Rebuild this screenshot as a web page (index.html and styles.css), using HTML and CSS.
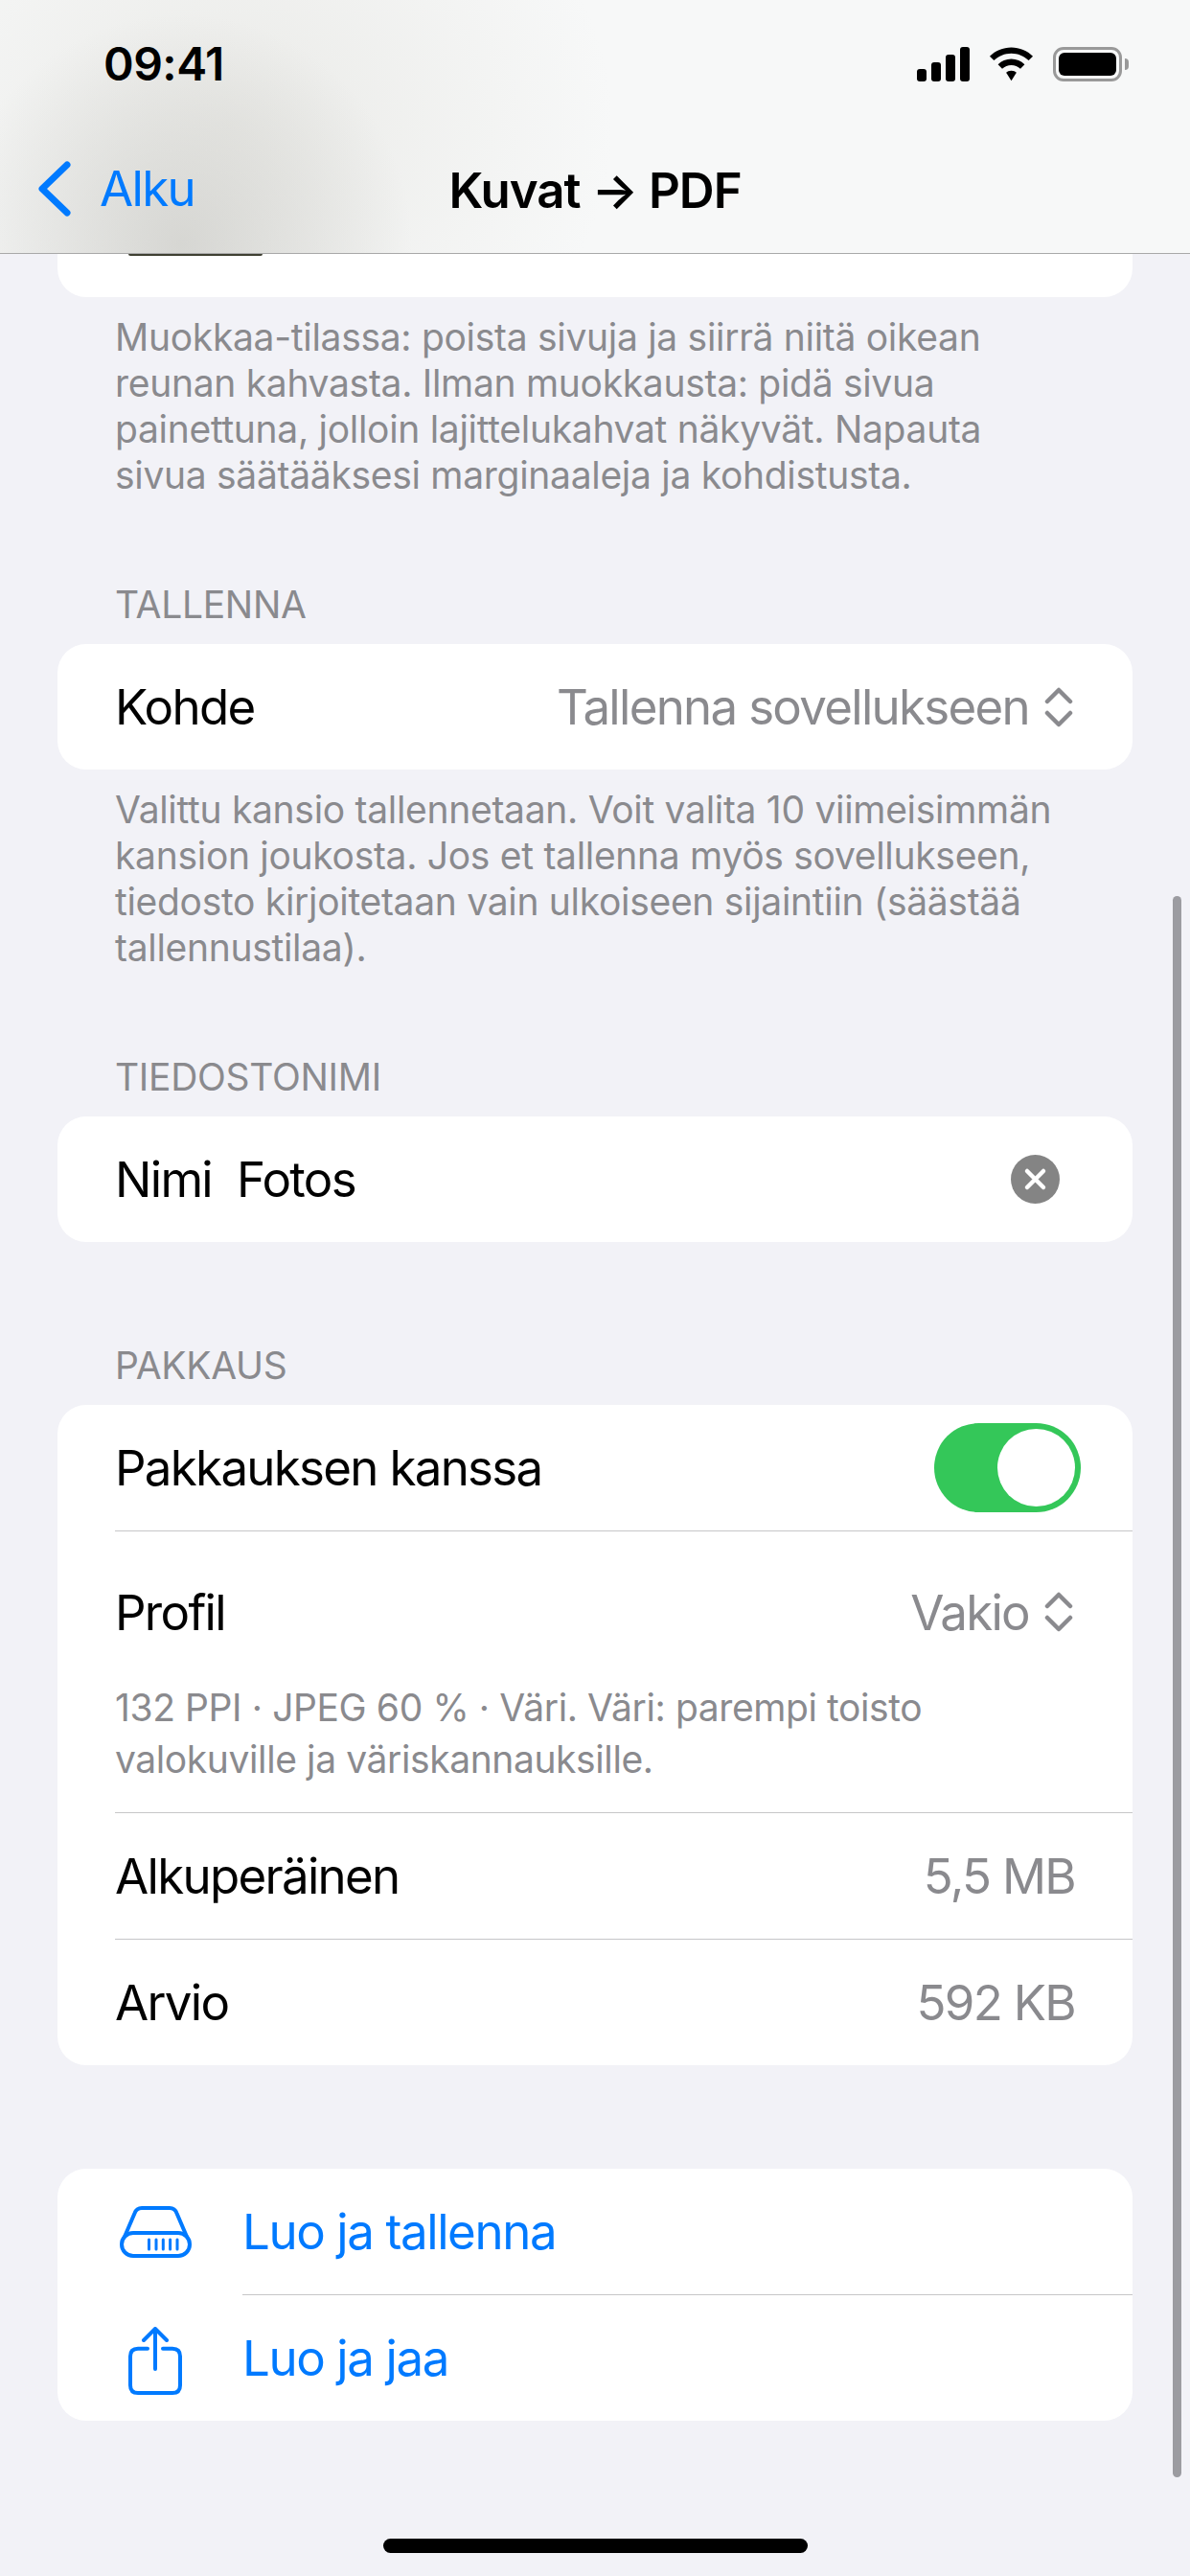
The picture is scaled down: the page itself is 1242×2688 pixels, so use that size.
FILE: index.html
```html
<!DOCTYPE html>
<html lang="fi">
<head>
    <meta charset="UTF-8">
    <meta name="viewport" content="width=device-width, initial-scale=1.0">
    <title>Kuvat → PDF</title>
    <link rel="stylesheet" href="styles.css">
</head>
<body>
    <div class="phone">
        <!-- Status + nav -->
        <header class="top-bar">
            <div class="status-bar">
                <span class="time">09:41</span>
                <div class="status-icons">
                    <svg class="icon-signal" width="55" height="36" viewBox="0 0 55 36">
                        <rect x="0" y="23" width="10" height="13" rx="3"/>
                        <rect x="15" y="16" width="10" height="20" rx="3"/>
                        <rect x="30" y="8" width="10" height="28" rx="3"/>
                        <rect x="45" y="0" width="10" height="36" rx="3"/>
                    </svg>
                    <svg class="icon-wifi" width="47" height="36" viewBox="0 0 48 36">
                        <path d="M24 0C15 0 7 3.500 1 9.500L5.500 14C10.500 9.300 17 6.500 24 6.500S37.500 9.300 42.500 14L47 9.500C41 3.500 33 0 24 0Z"/>
                        <path d="M24 12.500C18.500 12.500 13.500 14.700 9.800 18.300L14.300 22.800C16.900 20.400 20.300 19 24 19S31.100 20.400 33.700 22.800L38.200 18.300C34.500 14.700 29.500 12.500 24 12.500Z"/>
                        <path d="M24 25C21.500 25 19.800 25.800 18.500 27L24 35.500L29.500 27C28.200 25.800 26.500 25 24 25Z"/>
                    </svg>
                    <div class="battery"><div class="battery-fill"></div></div>
                </div>
            </div>
            <div class="nav-bar">
                <a class="back">
                    <svg width="36" height="58" viewBox="0 0 36 58">
                        <path d="M32 4L6 29L32 54" fill="none" stroke="#007aff" stroke-width="7" stroke-linecap="round" stroke-linejoin="round"/>
                    </svg>
                    <span>Alku</span>
                </a>
                <h1>Kuvat → PDF</h1>
            </div>
        </header>

        <main class="content">
            <div class="card card-stub"><div class="thumb-edge"></div></div>
            <p class="note">Muokkaa-tilassa: poista sivuja ja siirrä niitä oikean reunan kahvasta. Ilman muokkausta: pidä sivua painettuna, jolloin lajittelukahvat näkyvät. Napauta sivua säätääksesi marginaaleja ja kohdistusta.</p>

            <h2 class="section-title">TALLENNA</h2>
            <div class="card">
                <div class="row">
                    <span>Kohde</span>
                    <span class="value">Tallenna sovellukseen
                        <svg class="updown" width="30" height="42" viewBox="0 0 30 42"><path d="M3 15L15 3L27 15M3 27L15 39L27 27" fill="none" stroke="#8a8a8e" stroke-width="4.500" stroke-linecap="round" stroke-linejoin="round"/></svg>
                    </span>
                </div>
            </div>
            <p class="note">Valittu kansio tallennetaan. Voit valita 10 viimeisimmän kansion joukosta. Jos et tallenna myös sovellukseen, tiedosto kirjoitetaan vain ulkoiseen sijaintiin (säästää tallennustilaa).</p>

            <h2 class="section-title">TIEDOSTONIMI</h2>
            <div class="card">
                <div class="row">
                    <span class="name-field"><span>Nimi</span><span>Fotos</span></span>
                    <svg class="clear" width="51" height="51" viewBox="0 0 51 51">
                        <circle cx="25.500" cy="25.500" r="25.500" fill="#848484"/>
                        <path d="M17 17L34 34M34 17L17 34" stroke="#fff" stroke-width="4.500" stroke-linecap="round"/>
                    </svg>
                </div>
            </div>

            <h2 class="section-title section-gap">PAKKAUS</h2>
            <div class="card">
                <div class="row row-toggle">
                    <span>Pakkauksen kanssa</span>
                    <div class="toggle"><div class="knob"></div></div>
                </div>
                <div class="divider"></div>
                <div class="row row-profile">
                    <span>Profil</span>
                    <span class="value">Vakio
                        <svg class="updown" width="30" height="42" viewBox="0 0 30 42"><path d="M3 15L15 3L27 15M3 27L15 39L27 27" fill="none" stroke="#8a8a8e" stroke-width="4.500" stroke-linecap="round" stroke-linejoin="round"/></svg>
                    </span>
                </div>
                <p class="profile-note">132 PPI · JPEG 60 % · Väri. Väri: parempi toisto valokuville ja väriskannauksille.</p>
                <div class="divider"></div>
                <div class="row">
                    <span>Alkuperäinen</span>
                    <span class="value value-end">5,5 MB</span>
                </div>
                <div class="divider"></div>
                <div class="row">
                    <span>Arvio</span>
                    <span class="value value-end">592 KB</span>
                </div>
            </div>

            <div class="card actions">
                <div class="action">
                    <div class="action-icon">
                        <svg width="75" height="54" viewBox="0 0 75 54" fill="none" stroke="#007aff" stroke-width="4">
                            <path d="M5 32L15.500 7.500C17 3.500 19.500 2 23 2H52C55.500 2 58 3.500 59.500 7.500L70 32"/>
                            <rect x="2" y="28" width="71" height="24" rx="12"/>
                            <path d="M30.500 35V45M38 35V45M45.300 35V45M52.600 35V45M60 35V45" stroke-width="3" stroke-linecap="round"/>
                        </svg>
                    </div>
                    <span>Luo ja tallenna</span>
                </div>
                <div class="divider divider-action"></div>
                <div class="action">
                    <div class="action-icon icon-share">
                        <svg width="56" height="71" viewBox="0 0 56 71" fill="none" stroke="#007aff" stroke-width="4" stroke-linecap="round">
                            <path d="M20 22.700H10C4.500 22.700 2 25.200 2 30.700V61C2 66.500 4.500 69 10 69H46C51.500 69 54 66.500 54 61V30.700C54 25.200 51.500 22.700 46 22.700H36"/>
                            <path d="M28 44V2M16 14L28 2L40 14" stroke-linejoin="round"/>
                        </svg>
                    </div>
                    <span>Luo ja jaa</span>
                </div>
            </div>
        </main>

        <div class="scrollbar"></div>
        <div class="home-indicator"></div>
    </div>
</body>
</html>
```

FILE: styles.css
```css
* {
    margin: 0;
    padding: 0;
    box-sizing: border-box;
}

body {
    font-family: Inter, 'Noto Sans', sans-serif;
    background: #f2f2f7;
    color: #000;
}

.phone {
    position: relative;
    width: 1242px;
    height: 2688px;
    overflow: hidden;
    background: #f2f2f7;
}

/* Top bar */
.top-bar {
    height: 265px;
    border-bottom: 1px solid #a9a9a9;
    background:
        radial-gradient(ellipse 240px 240px at 190px 255px, rgba(208, 208, 204, 0.8), rgba(208, 208, 204, 0) 100%),
        radial-gradient(ellipse 400px 340px at 240px 130px, rgba(230, 230, 226, 0.75), rgba(230, 230, 226, 0) 100%),
        #f7f8f8;
}

.status-bar {
    height: 132px;
    padding: 42px 71px 0 108px;
    display: flex;
    justify-content: space-between;
    align-items: flex-start;
}

.time {
    font-size: 48px;
    font-weight: 600;
    line-height: 50px;
    letter-spacing: -0.5px;
}

.status-icons {
    display: flex;
    align-items: center;
    gap: 20px;
    margin-top: 7px;
}

.battery {
    position: relative;
    width: 72px;
    height: 36px;
    border: 3px solid #999;
    border-radius: 11px;
    padding: 3px;
}

.battery::after {
    content: '';
    position: absolute;
    right: -10px;
    top: 9px;
    width: 4px;
    height: 12px;
    background: #999;
    border-radius: 0 4px 4px 0;
}

.battery-fill {
    height: 100%;
    background: #000;
    border-radius: 6px;
}

.nav-bar {
    position: relative;
    height: 132px;
    display: flex;
    align-items: center;
    justify-content: center;
}

.back {
    position: absolute;
    left: 38px;
    top: 34px;
    display: flex;
    align-items: center;
    gap: 30px;
    color: #007aff;
    font-size: 51px;
    letter-spacing: -1.7px;
}

.back svg {
    display: block;
}

.nav-bar h1 {
    font-size: 51px;
    font-weight: 600;
    letter-spacing: -1px;
}

/* Content */
.content {
    padding: 0 60px;
}

.card {
    background: #fff;
    border-radius: 30px;
}

.card-stub {
    height: 45px;
    border-radius: 0 0 30px 30px;
}

.thumb-edge {
    width: 140px;
    height: 2px;
    margin-left: 74px;
    background: #3f4032;
    border-radius: 0 0 8px 8px;
}

.note {
    font-size: 39px;
    line-height: 48px;
    color: #8a8a8e;
    padding: 18px 60px 0;
    letter-spacing: -0.3px;
}

.section-title {
    font-size: 39px;
    font-weight: 400;
    line-height: 48px;
    color: #8a8a8e;
    padding: 0 60px;
    margin: 87px 0 17px;
    letter-spacing: -0.3px;
}

.section-gap {
    margin-top: 105px;
}

.row {
    height: 131px;
    padding: 0 60px;
    display: flex;
    align-items: center;
    justify-content: space-between;
    font-size: 51px;
    letter-spacing: -1.7px;
}

.row-profile {
    height: 132px;
    padding-top: 38px;
    padding-bottom: 2px;
}

.value {
    display: flex;
    align-items: center;
    gap: 16px;
    color: #8a8a8e;
}

.updown {
    margin-right: 2px;
}

.name-field {
    display: flex;
    gap: 26px;
}

.clear {
    margin-right: 16px;
}

.row-toggle {
    padding-right: 54px;
}

.toggle {
    position: relative;
    width: 153px;
    height: 93px;
    border-radius: 47px;
    background: #34c759;
}

.knob {
    position: absolute;
    top: 6px;
    right: 6px;
    width: 81px;
    height: 81px;
    border-radius: 50%;
    background: #fff;
}

.divider {
    height: 1px;
    margin-left: 60px;
    background: #c6c6c8;
}

.divider-action {
    margin-left: 193px;
}

.profile-note {
    font-size: 39px;
    line-height: 54px;
    color: #8a8a8e;
    padding: 0 60px 28px;
    margin-top: 25px;
    letter-spacing: -0.4px;
}

/* Actions */
.actions {
    margin-top: 108px;
}

.action {
    height: 131px;
    display: flex;
    align-items: center;
    font-size: 51px;
    letter-spacing: -1.4px;
    color: #007aff;
}

.action-icon {
    width: 130px;
    margin: 0 26px 0 37px;
    display: flex;
    justify-content: center;
}

.icon-share {
    margin-top: 6px;
}

/* Overlays */
.scrollbar {
    position: absolute;
    left: 1224px;
    top: 935px;
    width: 9px;
    height: 1650px;
    border-radius: 5px;
    background: #9c9ca1;
}

.home-indicator {
    position: absolute;
    left: 400px;
    top: 2649px;
    width: 443px;
    height: 15px;
    border-radius: 8px;
    background: #000;
}
```
